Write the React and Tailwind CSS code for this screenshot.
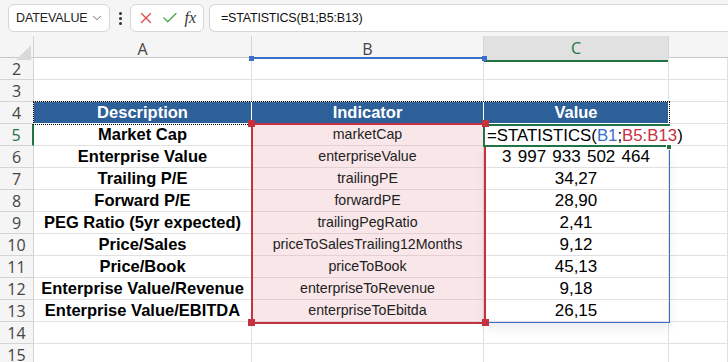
import { ChevronDown, X, Check } from 'lucide-react'

const rows = [
  { desc: 'Market Cap', ind: 'marketCap', value: '' },
  { desc: 'Enterprise Value', ind: 'enterpriseValue', value: '3 997 933 502 464' },
  { desc: 'Trailing P/E', ind: 'trailingPE', value: '34,27' },
  { desc: 'Forward P/E', ind: 'forwardPE', value: '28,90' },
  { desc: 'PEG Ratio (5yr expected)', ind: 'trailingPegRatio', value: '2,41' },
  { desc: 'Price/Sales', ind: 'priceToSalesTrailing12Months', value: '9,12' },
  { desc: 'Price/Book', ind: 'priceToBook', value: '45,13' },
  { desc: 'Enterprise Value/Revenue', ind: 'enterpriseToRevenue', value: '9,18' },
  { desc: 'Enterprise Value/EBITDA', ind: 'enterpriseToEbitda', value: '26,15' },
]

const grid = 'grid grid-cols-[34px_218px_232px_185px_1fr]'
const cell = 'h-[22px] border-r border-b border-[#e1e1e1] flex items-center justify-center whitespace-nowrap overflow-hidden'
const rowHead = 'h-[22px] bg-[#f5f5f5] border-r border-b border-[#d4d4d4] flex items-center justify-center text-[16px] text-[#444]'

const FormulaBar = () => (
  <div className="h-[36px] bg-[#f5f5f5] flex items-center pl-[8px] gap-0">
    <div className="w-[102px] h-[28px] bg-white border border-[#d6d6d6] rounded-[6px] flex items-center justify-between pl-[7px] pr-[5px]">
      <span className="text-[12.5px] text-[#222] tracking-[-0.1px]">DATEVALUE</span>
      <ChevronDown className="w-[14px] h-[14px] text-[#555]" strokeWidth={1.5} />
    </div>
    <div className="w-[20px] flex flex-col items-center gap-[2px]">
      <span className="w-[3px] h-[3px] rounded-full bg-[#333]"></span>
      <span className="w-[3px] h-[3px] rounded-full bg-[#333]"></span>
      <span className="w-[3px] h-[3px] rounded-full bg-[#333]"></span>
    </div>
    <div className="w-[74px] h-[28px] bg-white border border-[#d6d6d6] rounded-[6px] flex items-center justify-between pl-[6px] pr-[7px]">
      <X className="w-[18px] h-[18px] text-[#e0474c]" strokeWidth={1.6} />
      <Check className="w-[18px] h-[18px] text-[#43a047]" strokeWidth={1.6} />
      <span className="text-[16px] italic text-[#333] font-['Liberation_Serif',serif] leading-none">fx</span>
    </div>
    <div className="flex-1 ml-[5px] h-[28px] bg-white border border-[#d6d6d6] rounded-l-[6px] border-r-0 flex items-center pl-[11px]">
      <span className="text-[12.5px] text-[#111] tracking-[-0.2px]">=STATISTICS(B1;B5:B13)</span>
    </div>
  </div>
)

const App = () => {
  return (
    <div className="w-[728px] h-[362px] overflow-hidden bg-white font-['Liberation_Sans',Arial,sans-serif]">
      <FormulaBar />

      <div className="relative">
        {/* Column headers */}
        <div className={`${grid} h-[22px] bg-[#f5f5f5] border-b border-[#c8c8c8]`}>
          <div className="relative border-r border-[#d4d4d4]">
            <div className="absolute right-[2px] bottom-[2px] w-0 h-0 border-l-[15px] border-l-transparent border-b-[15px] border-b-[#d9d9d9]"></div>
          </div>
          <div className="border-r border-[#d4d4d4] flex items-center justify-center text-[16px] text-[#444] font-['Open_Sans',sans-serif]">A</div>
          <div className="border-r border-[#d4d4d4] flex items-center justify-center text-[16px] text-[#444] font-['Open_Sans',sans-serif]">B</div>
          <div className="bg-[#e1e1e1] border-r border-[#d4d4d4] border-b-2 border-b-[#217346] flex items-center justify-center text-[16px] text-[#217346] font-['Open_Sans',sans-serif]">C</div>
          <div></div>
        </div>

        {/* Empty rows 2-3 */}
        {[2, 3].map((n) => (
          <div key={n} className={grid}>
            <div className={`${rowHead} font-['Open_Sans',sans-serif]`}>{n}</div>
            <div className={cell}></div>
            <div className={cell}></div>
            <div className={cell}></div>
            <div className={cell}></div>
          </div>
        ))}

        {/* Table header row 4 */}
        <div className={grid}>
          <div className={`${rowHead} font-['Open_Sans',sans-serif]`}>4</div>
          <div className={`${cell} bg-[#2d5f98] border-white text-white font-bold text-[16.5px]`}>Description</div>
          <div className={`${cell} bg-[#2d5f98] border-white text-white font-bold text-[16.5px]`}>Indicator</div>
          <div className={`${cell} bg-[#2d5f98] border-white text-white font-bold text-[16.5px]`}>Value</div>
          <div className={cell}></div>
        </div>

        {/* Data rows 5-13 */}
        {rows.map((row, i) => {
          const n = i + 5
          const active = n === 5
          return (
            <div key={n} className={grid}>
              <div
                className={`${rowHead} font-['Open_Sans',sans-serif] ${
                  active ? 'bg-[#e1e1e1] text-[#217346] border-r-2 border-r-[#217346]' : ''
                }`}
              >
                {n}
              </div>
              <div className={`${cell} font-bold text-[16.5px] text-black`}>{row.desc}</div>
              <div className={`${cell} bg-[#f9e6e8] border-[#e3d0d2] text-[14.2px] text-[#222]`}>{row.ind}</div>
              <div className={`${cell} text-[17px] text-black [word-spacing:1.5px]`}>{row.value}</div>
              <div className={cell}></div>
            </div>
          )
        })}

        {/* Empty rows 14-15 */}
        {[14, 15].map((n) => (
          <div key={n} className={grid}>
            <div className={`${rowHead} font-['Open_Sans',sans-serif]`}>{n}</div>
            <div className={cell}></div>
            <div className={cell}></div>
            <div className={cell}></div>
            <div className={cell}></div>
          </div>
        ))}

        {/* B1 reference (blue), only bottom edge visible */}
        <div className="absolute left-[251px] top-[21px] w-[234px] h-[2px] bg-[#3b6fcb]"></div>
        <div className="absolute left-[249px] top-[20px] w-[5px] h-[5px] bg-[#3b6fcb]"></div>
        <div className="absolute left-[482px] top-[20px] w-[5px] h-[5px] bg-[#3b6fcb]"></div>

        {/* Copy marquee around A4:C4 */}
        <div className="absolute left-[33px] top-[65px] w-[637px] h-[24px] border border-dotted border-black"></div>

        {/* Spill range outline */}
        <div className="absolute left-[484px] top-[110px] w-[186px] h-[177px] border-r border-b border-[#3b6fcb] shadow-[0_6px_10px_rgba(0,0,0,0.07)]"></div>

        {/* B5:B13 reference (red) */}
        <div className="absolute left-[251px] top-[87px] w-[235px] h-[201px] border-2 border-[#c4323f]"></div>

        {/* Cell in edit mode */}
        <div className="absolute left-[483px] top-[88px] w-[187px] h-[23px] border-2 border-r-0 border-[#217346] bg-white flex items-center pl-[2px] overflow-visible">
          <span className="text-[16.8px] text-black whitespace-nowrap">
            =STATISTICS(<span className="text-[#3b6fcb]">B1</span>;<span className="text-[#c4323f]">B5:B13</span>)
          </span>
        </div>
        <div className="absolute left-[666px] top-[108px] w-[6px] h-[6px] bg-[#217346] border border-white"></div>

        {/* Red range handles */}
        <div className="absolute left-[248px] top-[84px] w-[7px] h-[7px] bg-[#c4323f]"></div>
        <div className="absolute left-[482px] top-[84px] w-[7px] h-[7px] bg-[#c4323f]"></div>
        <div className="absolute left-[248px] top-[283px] w-[7px] h-[7px] bg-[#c4323f]"></div>
        <div className="absolute left-[482px] top-[283px] w-[7px] h-[7px] bg-[#c4323f]"></div>
      </div>
    </div>
  )
}

export default App
